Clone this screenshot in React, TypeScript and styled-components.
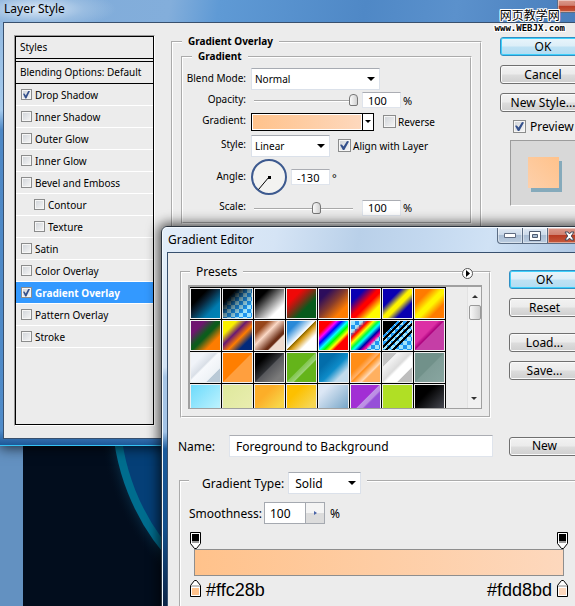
import React from "react";
import styled, { createGlobalStyle, css } from "styled-components";

const Global = createGlobalStyle`
  * { box-sizing: border-box; }
  body { margin: 0; font-family: "Noto Sans", "Open Sans", sans-serif; font-size: 10px; color: #000; }
  button, input, select { font: inherit; color: inherit; margin: 0; padding: 0; }
  fieldset { margin: 0; min-width: 0; }
`;

/* ---------- desktop ---------- */

const Desktop = styled.main`
  position: relative;
  height: 100vh;
  overflow: hidden;
  background: linear-gradient(90deg, #6391c1 0 23px, #020d1d 23px);
`;

const Wallpaper = styled.svg`
  position: absolute;
  left: 23px;
  top: 0;
`;

const Watermark = styled.div`
  position: absolute;
  top: 8px;
  right: 10px;
  display: flex;
  flex-direction: column;
  align-items: center;
  gap: 2px;
  text-shadow: 1px 0 #fff, -1px 0 #fff, 0 1px #fff, 0 -1px #fff, 1px 1px #fff, -1px -1px #fff, 1px -1px #fff, -1px 1px #fff;
`;

const WatermarkName = styled.span`
  font: 12px/14px "Noto Sans CJK SC", sans-serif;
`;

const WatermarkSite = styled.span`
  font: bold 9px/8px "DejaVu Sans Mono", monospace;
`;

/* ---------- windows ---------- */

const LayerWindow = styled.section`
  position: absolute;
  top: 0;
  left: 0;
  right: -32px;
  padding: 0 4px 6px 3px;
  border-bottom: 1px solid #35c3f5;
  background: linear-gradient(180deg, #8fb6de 0, #a5cbee 110px, #4d88c6 130px, #4f8bc9 430px, #1a5595 446px);
  box-shadow: 0 2px 12px rgba(0, 0, 0, 0.7);
`;

const EditorWindow = styled.section`
  position: absolute;
  top: 226px;
  left: 161px;
  right: -24px;
  padding: 0 5px 5px;
  border: 1px solid #2c3540;
  border-radius: 6px 6px 0 0;
  background: linear-gradient(180deg, #e6f0fa 0, #d3e3f4 140px, #a8c6e6 150px, #a3c3e6 205px, #1c5b9c 222px, #14508c 300px, #0c2344 380px);
  box-shadow: inset 1px 1px 0 #f4faff, 0 0 12px 3px rgba(0, 0, 0, 0.65);
`;

const TitleBar = styled.header<{ $tone: "deep" | "pale" }>`
  display: flex;
  align-items: center;
  justify-content: space-between;
  font-size: 12px;
  ${(p) =>
    p.$tone === "deep"
      ? css`
          height: 22px;
          margin: 0 -4px 0 -3px;
          padding: 0 5px 4px 4px;
          background: radial-gradient(ellipse 80px 20px at 36px 9px, #dbe8f6 0, rgba(170, 200, 230, 0.6) 60%, transparent 100%),
            linear-gradient(100deg, #7fabd9 0, #83aedb 28%, #5f9ad5 36%, #4f88c6 60%, #5b91cc 75%, #4479b8 100%);
        `
      : css`
          height: 25px;
          margin: 0 -4px;
          padding: 0 5px;
          background: linear-gradient(100deg, #e2edf9 0, #d5e4f5 26%, #b9d0e9 45%, #c3d8ef 60%, #d0e2f5 75%, #a7c2e0 100%);
          border-radius: 5px 5px 0 0;
          border-top: 1px solid #f4faff;
        `}
`;

const Title = styled.h1`
  margin: 0;
  font-size: 12px;
  font-weight: normal;
  line-height: 18px;
`;

const Controls = styled.div`
  display: flex;
  align-self: flex-start;
`;

const ControlButton = styled.button<{ $danger?: boolean; $short?: boolean }>`
  display: flex;
  align-items: center;
  justify-content: center;
  width: ${(p) => (p.$danger ? 45 : 26)}px;
  height: ${(p) => (p.$short ? 13 : 16)}px;
  border: 1px solid #5b6d84;
  border-top: 0;
  margin-left: -1px;
  box-shadow: inset 0 0 0 1px rgba(255, 255, 255, 0.45);
  background: ${(p) =>
    p.$danger
      ? "linear-gradient(#dc9a8c 0, #d08070 45%, #b83a22 50%, #c65a3c 100%)"
      : "linear-gradient(#dfe9f4 0, #cbd9e9 45%, #a9bdd4 50%, #bccde0 100%)"};
  &:first-child {
    border-bottom-left-radius: 4px;
  }
`;

const Body = styled.div`
  background: #ececec;
  border: 1px solid #38506e;
`;

/* ---------- shared controls ---------- */

const PushButton = styled.button<{ $primary?: boolean }>`
  height: 19px;
  width: 100%;
  border: 1px solid ${(p) => (p.$primary ? "#2f8fc4" : "#707070")};
  border-radius: 3px;
  font-size: 12px;
  line-height: 16px;
  white-space: nowrap;
  background: ${(p) =>
    p.$primary
      ? "linear-gradient(#e9f5fb 0, #dceef8 48%, #bfe2f4 52%, #b2dcf2 100%)"
      : "linear-gradient(#f2f2f2 0, #ebebeb 48%, #dddddd 52%, #cfcfcf 100%)"};
  box-shadow: inset 0 0 0 1px ${(p) => (p.$primary ? "#3fd0fb" : "#fafafa")};
`;

const Group = styled.fieldset`
  border: 2px groove #fff;
`;

const Check = styled.input.attrs({ type: "checkbox" })<{ $small?: boolean }>`
  appearance: none;
  flex: none;
  display: grid;
  place-items: center;
  width: ${(p) => (p.$small ? 11 : 13)}px;
  height: ${(p) => (p.$small ? 11 : 13)}px;
  border: 1px solid #8b8c8c;
  background: linear-gradient(135deg, #cfd3d8, #f6f6f6);
  box-shadow: inset 0 0 0 1px #f6f6f6;
  &:checked::before {
    content: "";
    width: ${(p) => (p.$small ? 7 : 9)}px;
    height: ${(p) => (p.$small ? 8 : 9)}px;
    background: #34508c;
    clip-path: polygon(0 42%, 20% 38%, 40% 62%, 78% 0, 100% 6%, 48% 100%, 32% 100%);
  }
`;

const CheckLabel = styled.label<{ $large?: boolean }>`
  display: flex;
  align-items: center;
  gap: ${(p) => (p.$large ? 4 : 2)}px;
  font-size: ${(p) => (p.$large ? 12 : 10)}px;
  white-space: nowrap;
`;

const DropFrame = styled.span<{ $w: number }>`
  display: inline-grid;
  align-items: center;
  width: ${(p) => p.$w}px;
  height: 22px;
  &::after {
    content: "";
    grid-area: 1 / 1;
    justify-self: end;
    margin-right: 5px;
    border: 4px solid transparent;
    border-top-color: #000;
    border-bottom: 0;
    pointer-events: none;
  }
`;

const Drop = styled.select<{ $large?: boolean }>`
  appearance: none;
  grid-area: 1 / 1;
  width: 100%;
  height: 100%;
  padding-left: ${(p) => (p.$large ? 6 : 3)}px;
  font-size: ${(p) => (p.$large ? 12 : 10)}px;
  background: #fff;
  border: 1px solid #dbe1ea;
  border-top-color: #a7abb2;
  border-radius: 0;
`;

const TextBox = styled.input<{ $kind: "small" | "spin" | "wide" }>`
  width: ${(p) => ({ small: "39px", spin: "42px", wide: "100%" })[p.$kind]};
  height: ${(p) => (p.$kind === "small" ? 16 : 22)}px;
  padding: 0 5px;
  font-size: ${(p) => (p.$kind === "small" ? 11 : 12)}px;
  background: #fff;
  border: 1px solid #dfe4ec;
  border-top-color: #abadb3;
  ${(p) => p.$kind === "spin" && "border-color: #a5a9b0;"}
  ${(p) => p.$kind === "wide" && "padding-left: 6px;"}
`;

const Range = styled.input.attrs({ type: "range" })`
  appearance: none;
  width: 107px;
  height: 14px;
  background: linear-gradient(#a9a9a9, #a9a9a9) 3px 7px / 99px 1px no-repeat,
    linear-gradient(#fff, #fff) 3px 8px / 99px 1px no-repeat;
  &::-webkit-slider-thumb {
    appearance: none;
    width: 9px;
    height: 12px;
    border: 1px solid #777;
    border-radius: 4px 4px 2px 2px;
    background: linear-gradient(90deg, #fafafa, #d2d2d2);
  }
`;

/* ---------- layer style dialog ---------- */

const LayerBody = styled(Body)`
  display: flex;
  align-items: stretch;
  padding: 12px 16px 12px 10px;
`;

const StyleList = styled.nav`
  flex: none;
  width: 141px;
  min-height: 391px;
  border: 1px solid #999;
  border-right-color: #fff;
  border-bottom-color: #fff;
`;

const StyleFrame = styled.ul`
  height: 100%;
  margin: 0;
  padding: 0;
  list-style: none;
  border: 1px solid #000;
`;

const StyleHeading = styled.li<{ $divided?: boolean }>`
  height: ${(p) => (p.$divided ? 23 : 22)}px;
  padding-left: 4px;
  line-height: 20px;
  border-bottom: 1px solid #000;
  ${(p) => p.$divided && "border-top: 1px solid #000; margin-top: 2px;"}
`;

const StyleRow = styled.li<{ $nested?: boolean; $selected?: boolean }>`
  display: flex;
  align-items: center;
  height: 22px;
  padding-left: ${(p) => (p.$nested ? 18 : 5)}px;
  border-bottom: 1px solid #fff;
  ${(p) => p.$selected && "background: #3399ff; color: #fff; font-weight: bold;"}
  label {
    gap: 3px;
  }
`;

const Overlay = styled(Group)`
  flex: 1;
  margin: 0 18px 0 16px;
  padding: 2px 8px 8px;
`;

const BoldLegend = styled.legend<{ $inset?: boolean }>`
  margin-left: ${(p) => (p.$inset ? 9 : 1)}px;
  padding: 0 6px;
  font-weight: bold;
  font-size: 10px;
  line-height: 13px;
`;

const GradientGroup = styled(Group)`
  padding: 5px 0 3px;
`;

const Row = styled.div<{ $h: number }>`
  display: grid;
  grid-template-columns: 63px 1fr;
  column-gap: 5px;
  align-items: center;
  height: ${(p) => p.$h}px;
  white-space: nowrap;
`;

const RowLabel = styled.label`
  text-align: right;
  line-height: 14px;
  padding-bottom: 3px;
`;

const Cells = styled.div<{ $gap?: number }>`
  display: flex;
  align-items: center;
  gap: ${(p) => p.$gap ?? 4}px;
`;

const Unit = styled.span`
  margin-left: -2px;
  font-size: 11px;
`;

const GradientPicker = styled.button`
  display: flex;
  width: 123px;
  height: 18px;
  border: 1px solid #000;
  background: #fff;
`;

const PickerFill = styled.span`
  flex: 1;
  margin: 1px;
  align-self: stretch;
  background: linear-gradient(90deg, #ffc28b, #fdd8bd);
`;

const PickerArrow = styled.span`
  display: grid;
  place-items: center;
  align-self: stretch;
  width: 11px;
  border-left: 1px solid #000;
  &::after {
    content: "";
    border: 3px solid transparent;
    border-top-color: #000;
    border-bottom: 0;
  }
`;

const ActionColumn = styled.div`
  flex: none;
  display: flex;
  flex-direction: column;
  gap: 9px;
  width: 86px;
  padding-top: 2px;
`;

const PreviewOption = styled.div`
  margin: -3px 0 -4px 13px;
`;

const PreviewBox = styled.div`
  display: grid;
  place-items: center;
  width: 66px;
  height: 66px;
  margin-left: 10px;
  padding-bottom: 2px;
  background: #d8d8d8;
  border: 1px solid #9c9c9c;
  border-right-color: #fff;
  border-bottom-color: #fff;
`;

const PreviewSwatch = styled.div`
  width: 31px;
  height: 31px;
  background: linear-gradient(45deg, #fdd0ab, #ffc28b);
  box-shadow: 3px 4px 0 #85aabb;
`;

/* ---------- gradient editor dialog ---------- */

const EditorBody = styled(Body)`
  padding: 11px 12px 40px 10px;
  font-size: 12px;
`;

const EditorTop = styled.div`
  display: flex;
  gap: 18px;
  margin-left: 2px;
`;

const Presets = styled(Group)`
  position: relative;
  flex: 1;
  padding: 5px 7px 7px 6px;
`;

const PresetsLegend = styled.legend`
  margin-left: 2px;
  padding: 0 6px;
  line-height: 16px;
`;

const PresetMenu = styled.button`
  position: absolute;
  top: -13px;
  right: 15px;
  display: grid;
  width: 13px;
  height: 13px;
  border: 0;
  background: none;
`;

const PresetList = styled.div`
  display: flex;
  justify-content: space-between;
  height: 124px;
  overflow: hidden;
  border: 2px solid #a0a0a0;
  border-right-width: 1px;
  border-bottom: 1px solid #a0a0a0;
`;

const PresetGrid = styled.div`
  display: grid;
  grid-template-columns: repeat(8, 32px);
  grid-auto-rows: 32px;
`;

const PresetCell = styled.button<{ $fill: string }>`
  border: solid #000;
  border-width: 1px 1px 0 0;
  background: ${(p) => p.$fill};
  box-shadow: inset 0 0 0 1px #f0f0f0;
`;

const ScrollTrack = styled.div`
  display: flex;
  flex-direction: column;
  align-items: center;
  width: 14px;
  background: #f1f1f1;
  border-left: 1px solid #e2e2e2;
`;

const ScrollArrow = styled.button<{ $down?: boolean }>`
  display: grid;
  place-items: center;
  width: 13px;
  height: 18px;
  border: 0;
  background: none;
  ${(p) => p.$down && "margin-top: auto; transform: rotate(180deg);"}
  &::after {
    content: "";
    border: 3px solid transparent;
    border-bottom-color: #333;
    border-top: 0;
  }
`;

const ScrollThumb = styled.div`
  width: 12px;
  height: 15px;
  border: 1px solid #999;
  border-radius: 2px;
  background: linear-gradient(90deg, #f8f8f8, #cfcfcf);
`;

const EditorActions = styled.div`
  flex: none;
  display: flex;
  flex-direction: column;
  gap: 9px;
  width: 71px;
  padding-top: 6px;
`;

const LoadSave = styled.div`
  display: flex;
  flex-direction: column;
  gap: 9px;
  margin-top: 7px;
`;

const NameRow = styled.div`
  display: grid;
  grid-template-columns: 51px 1fr 71px;
  align-items: center;
  margin-top: 17px;
  input {
    width: calc(100% - 16px);
  }
`;

const TypeGroup = styled(Group)`
  margin: 11px 0 0 1px;
  padding: 8px 10px 12px 8px;
`;

const TypeLegend = styled.legend`
  display: flex;
  align-items: center;
  gap: 4px;
  padding: 4px 6px 0 13px;
`;

const SmoothRow = styled.div`
  display: flex;
  align-items: center;
  label {
    width: 75px;
  }
`;

const SpinButton = styled.button`
  display: grid;
  place-items: center;
  width: 20px;
  height: 22px;
  margin: 0 5px 0 -1px;
  border: 1px solid #a5a9b0;
  background: linear-gradient(#f4f4f4 50%, #dcdcdc 50%);
  &::after {
    content: "";
    border: 2px solid transparent;
    border-left: 3px solid #4a64a8;
    border-right: 0;
  }
`;

const GradientTrack = styled.div`
  padding-left: 1px;
`;

const StopRow = styled.div<{ $below?: boolean }>`
  display: flex;
  align-items: center;
  gap: 5px;
  margin-top: ${(p) => (p.$below ? 1 : 8)}px;
  font: 18px/18px "Liberation Sans", Arial, sans-serif;
`;

const StopValue = styled.span`
  padding-top: 4px;
`;

const StopGap = styled.span`
  flex: 1;
`;

const GradientBar = styled.div`
  height: 27px;
  margin: 0 4px;
  border: 1px solid #8e8e8e;
  background: linear-gradient(90deg, #ffc28b, #fdd8bd);
`;

const checker = "conic-gradient(#1e96f0 25%, #9fe4fb 0 50%, #1e96f0 0 75%, #9fe4fb 0) 1px 1px / 8px 8px";

const presets: { name: string; fill: string }[] = [
  { name: "Foreground to Background", fill: "linear-gradient(135deg, #000 30%, #0a2438 45%, #007cb0 72%, #0087b8)" },
  { name: "Foreground to Transparent", fill: `linear-gradient(135deg, #000 25%, rgba(0,0,0,.4) 48%, transparent 75%), ${checker}` },
  { name: "Black, White", fill: "linear-gradient(135deg, #000 25%, #777 48%, #fff 75%)" },
  { name: "Red, Green", fill: "linear-gradient(135deg, #f00808 28%, #a02012 42%, #075a1c 65%)" },
  { name: "Violet, Orange", fill: "linear-gradient(135deg, #2d0d5c 22%, #853b2c 48%, #ff7c00 75%)" },
  { name: "Blue, Red, Yellow", fill: "linear-gradient(135deg, #0a00b2 25%, #f00 48%, #f00 55%, #fffb00 76%)" },
  { name: "Blue, Yellow, Blue", fill: "linear-gradient(135deg, #0a00b2 32%, #fdf300 48%, #fdf300 56%, #0a00b2 72%)" },
  { name: "Orange, Yellow, Orange", fill: "linear-gradient(135deg, #ff7b00 28%, #fff500 48%, #fff500 56%, #ff7b00 74%)" },
  { name: "Violet, Green, Orange", fill: "linear-gradient(135deg, #6f1570 25%, #0d5c1c 46%, #0d5c1c 52%, #fd7c00 74%)" },
  { name: "Yellow, Violet, Orange, Blue", fill: "linear-gradient(135deg, #f9f000 25%, #6a1a72 42%, #fd7c00 58%, #00297b 76%)" },
  { name: "Copper", fill: "linear-gradient(135deg, #97461a 24%, #fbd8c5 42%, #6c2e16 66%, #6c2e16 70%, #efdcd0 73%)" },
  { name: "Chrome", fill: "linear-gradient(135deg, #2989d8 22%, #fff 48%, #906a00 50%, #d99f1c 56%, #fff 72%)" },
  { name: "Spectrum", fill: "linear-gradient(135deg, #f00 23%, #f0f 32%, #00f 40%, #0ff 50%, #0f0 58%, #ff0 67%, #f00 74%)" },
  { name: "Transparent Rainbow", fill: `linear-gradient(135deg, transparent 22%, #f00 31%, #ff0 40%, #0f4 48%, #0ff 54%, #00a 63%, #f09 70%, transparent 76%), ${checker}` },
  { name: "Transparent Stripes", fill: `linear-gradient(135deg, #000 26%, transparent 26% 31%, #000 31% 37%, transparent 37% 42%, #000 42% 48%, transparent 48% 53%, #000 53% 58%, transparent 58% 63%, #000 63% 68%, transparent 68%), ${checker}` },
  { name: "Magenta", fill: "linear-gradient(135deg, #dc30a5 40%, #ad007e 49%, #c53ea6 51%)" },
  { name: "Silver", fill: "linear-gradient(135deg, #f0f3f8 25%, #d9dfe7 44%, #f7f9fc 48%, #eef2f6 74%, #b9c9d6 75%)" },
  { name: "Orange Gloss", fill: "linear-gradient(135deg, #ff7e00 49%, #ff9f3e 51%)" },
  { name: "Graphite", fill: "linear-gradient(135deg, #000 25%, #303236 49%, #55565a 51%, #7b7b7b 80%)" },
  { name: "Green Gloss", fill: "linear-gradient(135deg, #64b41a 48%, #83c650 50%, #9bd277 60%, #64b41a 62%)" },
  { name: "Blue Mist", fill: "linear-gradient(135deg, #036daa 30%, #0d8cc9 54%, #c2dbec 76%)" },
  { name: "Orange Shine", fill: "linear-gradient(135deg, #ff8d17 36%, #ffb068 48%, #ff8d17 51%, #ffd9b5 66%, #ffb060 70%)" },
  { name: "Steel", fill: "linear-gradient(135deg, #c3c3c3 25%, #f3f3f3 26%, #dcdcdc 48%, #fff 54%, #fff 72%, #bebebe 74%)" },
  { name: "Sage", fill: "linear-gradient(135deg, #71918a 49%, #7f9d97 51%, #89a6a1)" },
  { name: "Sky", fill: "linear-gradient(135deg, #69d9fb, #c9f6fe)" },
  { name: "Lime Cream", fill: "linear-gradient(135deg, #dee89c, #ebeeb2)" },
  { name: "Apricot", fill: "linear-gradient(135deg, #fcae28 35%, #f7d548 75%)" },
  { name: "Gold", fill: "linear-gradient(135deg, #fdc000 30%, #f6d652 75%)" },
  { name: "Ice", fill: "linear-gradient(135deg, #dce7f5 20%, #73a3c6 90%)" },
  { name: "Purple Gloss", fill: "linear-gradient(135deg, #a22fd4 48%, #be93e6 50%, #bb8ee4 58%, #9650d8 62%)" },
  { name: "Lime", fill: "#b0df25" },
  { name: "Onyx", fill: "linear-gradient(135deg, #000 35%, #4a4c55 90%)" },
];

const effects: { name: string; on?: boolean; nested?: boolean; selected?: boolean }[] = [
  { name: "Drop Shadow", on: true },
  { name: "Inner Shadow" },
  { name: "Outer Glow" },
  { name: "Inner Glow" },
  { name: "Bevel and Emboss" },
  { name: "Contour", nested: true },
  { name: "Texture", nested: true },
  { name: "Satin" },
  { name: "Color Overlay" },
  { name: "Gradient Overlay", on: true, selected: true },
  { name: "Pattern Overlay" },
  { name: "Stroke" },
];

function CloseGlyph() {
  return (
    <svg width="13" height="10" viewBox="0 0 13 10">
      <path d="M2 1h3l1.500 2L8 1h3L8.300 5 11 9H8L6.500 7 5 9H2l2.700-4z" fill="#fff" stroke="#454b5c" strokeWidth="1" />
    </svg>
  );
}

function OpacityStop() {
  return (
    <svg width="11" height="17" viewBox="0 0 11 17">
      <path d="M.5.500h10v11l-4 5h-2l-4-5z" fill="#fff" stroke="#000" />
      <path d="M2 2h7v7H2z" fill="#000" />
      <path d="M2 9h7v2H2z" fill="#999" />
    </svg>
  );
}

function ColorStop({ color }: { color: string }) {
  return (
    <svg width="11" height="17" viewBox="0 0 11 17">
      <path d="M.5 16.500v-11l4-5h2l4 5v11z" fill="#fff" stroke="#000" />
      <path d="M1 6h9" stroke="#888" />
      <path d="M2 8h7v7H2z" fill={color} />
    </svg>
  );
}

function LayerStyleDialog() {
  return (
    <LayerWindow aria-label="Layer Style">
      <TitleBar $tone="deep">
        <Title>Layer Style</Title>
        <Controls>
          <ControlButton $danger $short aria-label="Close">
            <CloseGlyph />
          </ControlButton>
        </Controls>
      </TitleBar>
      <LayerBody>
        <StyleList>
          <StyleFrame>
            <StyleHeading>Styles</StyleHeading>
            <StyleHeading $divided>Blending Options: Default</StyleHeading>
            {effects.map((e) => (
              <StyleRow key={e.name} $nested={e.nested} $selected={e.selected}>
                <CheckLabel>
                  <Check $small defaultChecked={e.on} />
                  {e.name}
                </CheckLabel>
              </StyleRow>
            ))}
          </StyleFrame>
        </StyleList>
        <Overlay>
          <BoldLegend>Gradient Overlay</BoldLegend>
          <GradientGroup>
            <BoldLegend $inset>Gradient</BoldLegend>
            <Row $h={22}>
              <RowLabel htmlFor="blend">Blend Mode:</RowLabel>
              <DropFrame $w={129}>
                <Drop id="blend">
                  <option>Normal</option>
                </Drop>
              </DropFrame>
            </Row>
            <Row $h={20}>
              <RowLabel htmlFor="opacity">Opacity:</RowLabel>
              <Cells>
                <Range id="opacity" defaultValue={100} />
                <TextBox $kind="small" defaultValue="100" aria-label="Opacity percent" />
                <Unit>%</Unit>
              </Cells>
            </Row>
            <Row $h={23}>
              <RowLabel htmlFor="gradient">Gradient:</RowLabel>
              <Cells $gap={9}>
                <GradientPicker id="gradient">
                  <PickerFill />
                  <PickerArrow />
                </GradientPicker>
                <CheckLabel>
                  <Check />
                  Reverse
                </CheckLabel>
              </Cells>
            </Row>
            <Row $h={25}>
              <RowLabel htmlFor="style">Style:</RowLabel>
              <Cells $gap={8}>
                <DropFrame $w={79}>
                  <Drop id="style">
                    <option>Linear</option>
                  </Drop>
                </DropFrame>
                <CheckLabel>
                  <Check defaultChecked />
                  Align with Layer
                </CheckLabel>
              </Cells>
            </Row>
            <Row $h={38}>
              <RowLabel htmlFor="angle">Angle:</RowLabel>
              <Cells>
                <svg width="36" height="36" viewBox="0 0 36 36">
                  <circle cx="18" cy="18" r="17" fill="#f3f3f1" stroke="#3d5a8f" strokeWidth="2" />
                  <path d="M18 18L7.500 30.500" stroke="#000" />
                  <path d="M17 17h3v3h-3z" />
                </svg>
                <TextBox $kind="small" id="angle" defaultValue="-130" />
                <Unit>°</Unit>
              </Cells>
            </Row>
            <Row $h={23}>
              <RowLabel htmlFor="scale">Scale:</RowLabel>
              <Cells>
                <Range id="scale" defaultValue={62} />
                <TextBox $kind="small" defaultValue="100" aria-label="Scale percent" />
                <Unit>%</Unit>
              </Cells>
            </Row>
          </GradientGroup>
        </Overlay>
        <ActionColumn>
          <PushButton $primary>OK</PushButton>
          <PushButton>Cancel</PushButton>
          <PushButton>New Style...</PushButton>
          <PreviewOption>
            <CheckLabel $large>
              <Check defaultChecked />
              Preview
            </CheckLabel>
          </PreviewOption>
          <PreviewBox>
            <PreviewSwatch />
          </PreviewBox>
        </ActionColumn>
      </LayerBody>
    </LayerWindow>
  );
}

function GradientEditorDialog() {
  return (
    <EditorWindow aria-label="Gradient Editor">
      <TitleBar $tone="pale">
        <Title>Gradient Editor</Title>
        <Controls>
          <ControlButton aria-label="Minimize">
            <svg width="12" height="5" viewBox="0 0 12 5">
              <path d="M.5.500h11v4H.5z" fill="#fff" stroke="#5f6b80" />
            </svg>
          </ControlButton>
          <ControlButton aria-label="Maximize">
            <svg width="12" height="10" viewBox="0 0 12 10">
              <path d="M.5.500h11v9H.5z M3.500 3.500h5v3h-5z" fill="#fff" fillRule="evenodd" stroke="#4f5b70" />
            </svg>
          </ControlButton>
          <ControlButton $danger aria-label="Close">
            <CloseGlyph />
          </ControlButton>
        </Controls>
      </TitleBar>
      <EditorBody>
        <EditorTop>
          <Presets>
            <PresetsLegend>Presets</PresetsLegend>
            <PresetMenu aria-label="Preset menu">
              <svg width="13" height="13" viewBox="0 0 13 13">
                <circle cx="6.500" cy="6.500" r="5" fill="#fff" stroke="#555" />
                <path d="M5 3l4 3.500L5 10z" />
              </svg>
            </PresetMenu>
            <PresetList>
              <PresetGrid>
                {presets.map((p) => (
                  <PresetCell key={p.name} $fill={p.fill} aria-label={p.name} />
                ))}
              </PresetGrid>
              <ScrollTrack>
                <ScrollArrow aria-label="Scroll up" />
                <ScrollThumb />
                <ScrollArrow $down aria-label="Scroll down" />
              </ScrollTrack>
            </PresetList>
          </Presets>
          <EditorActions>
            <PushButton $primary>OK</PushButton>
            <PushButton>Reset</PushButton>
            <LoadSave>
              <PushButton>Load...</PushButton>
              <PushButton>Save...</PushButton>
            </LoadSave>
          </EditorActions>
        </EditorTop>
        <NameRow>
          <label htmlFor="name">Name:</label>
          <TextBox $kind="wide" id="name" defaultValue="Foreground to Background" />
          <PushButton>New</PushButton>
        </NameRow>
        <TypeGroup>
          <TypeLegend>
            <label htmlFor="type">Gradient Type:</label>
            <DropFrame $w={73}>
              <Drop $large id="type">
                <option>Solid</option>
              </Drop>
            </DropFrame>
          </TypeLegend>
          <SmoothRow>
            <label htmlFor="smooth">Smoothness:</label>
            <TextBox $kind="spin" id="smooth" defaultValue="100" />
            <SpinButton aria-label="Smoothness slider" />
            <span>%</span>
          </SmoothRow>
          <GradientTrack>
            <StopRow>
              <OpacityStop />
              <StopGap />
              <OpacityStop />
            </StopRow>
            <GradientBar />
            <StopRow $below>
              <ColorStop color="#ffc28b" />
              <StopValue>#ffc28b</StopValue>
              <StopGap />
              <StopValue>#fdd8bd</StopValue>
              <ColorStop color="#fdd8bd" />
            </StopRow>
          </GradientTrack>
        </TypeGroup>
      </EditorBody>
    </EditorWindow>
  );
}

export default function App() {
  return (
    <>
      <Global />
      <Desktop>
        <Wallpaper width="600" height="640" viewBox="0 0 600 640">
          <defs>
            <radialGradient id="halo" cx="314" cy="410" r="239" gradientUnits="userSpaceOnUse">
              <stop offset="0.930" stopColor="#0a3550" stopOpacity="0.7" />
              <stop offset="1" stopColor="#020d1d" stopOpacity="0" />
            </radialGradient>
          </defs>
          <circle cx="314" cy="410" r="239" fill="url(#halo)" />
          <circle cx="314" cy="410" r="221" fill="#053f77" stroke="#006d8e" strokeWidth="8" />
        </Wallpaper>
        <LayerStyleDialog />
        <GradientEditorDialog />
        <Watermark>
          <WatermarkName lang="zh">网页教学网</WatermarkName>
          <WatermarkSite>www.WEBJX.com</WatermarkSite>
        </Watermark>
      </Desktop>
    </>
  );
}
